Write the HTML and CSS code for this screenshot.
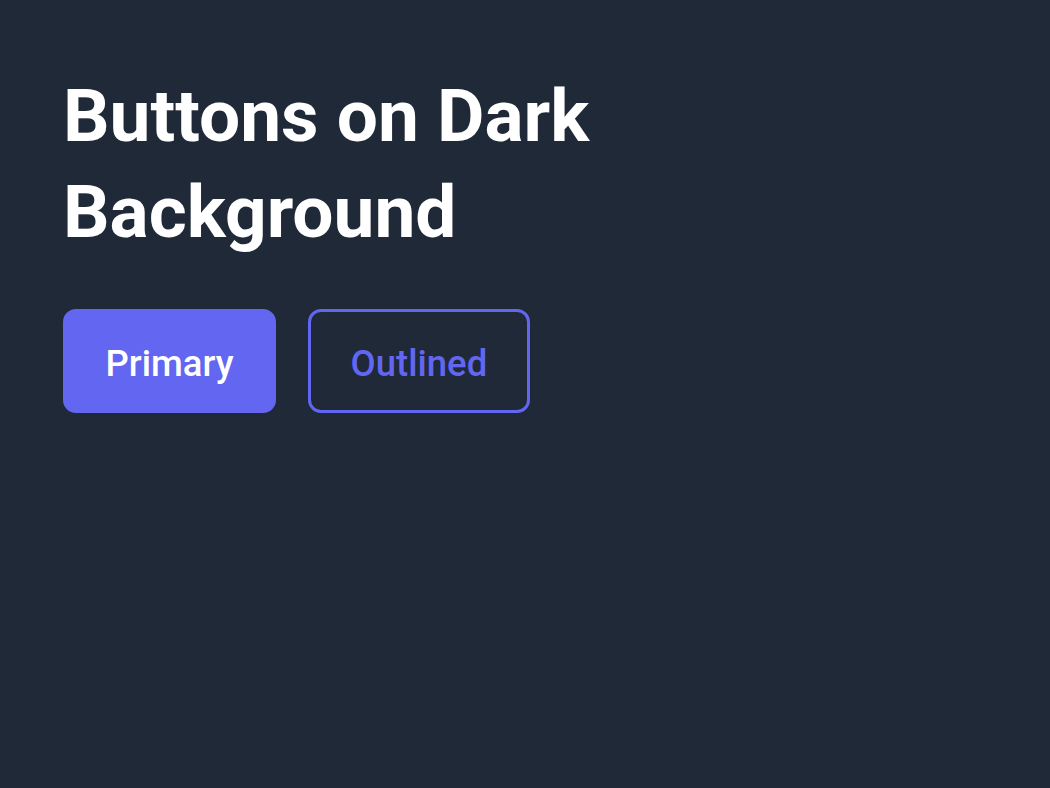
FILE: index.html
```html
<!DOCTYPE html>
<html lang="en">
<head>
<meta charset="utf-8">
<title>Buttons on Dark Background</title>
<link rel="stylesheet" href="styles.css">
</head>
<body>
<main class="page">
  <h1 class="title">Buttons on Dark Background</h1>
  <div class="actions">
    <button class="btn btn-primary">Primary</button>
    <button class="btn btn-outlined">Outlined</button>
  </div>
</main>
</body>
</html>
```
FILE: styles.css
```css
html, body {
  margin: 0;
  padding: 0;
  background: #1f2937;
  height: 100%;
}
body {
  font-family: Roboto, "Liberation Sans", sans-serif;
  color: #ffffff;
}
.page {
  padding: 68px 63px 64px;
}
.title {
  margin: 0 0 49px;
  font-size: 73px;
  line-height: 96px;
  font-weight: 700;
  color: #ffffff;
}
.actions {
  display: flex;
  gap: 32px;
  align-items: flex-start;
}
.btn {
  font-family: Roboto, "Liberation Sans", sans-serif;
  font-size: 36.5px;
  font-weight: 500;
  line-height: 54px;
  padding: 24.5px 39.5px 19.5px;
  border: 3px solid #6366f1;
  border-radius: 13px;
  cursor: pointer;
  margin: 0;
}
.btn-primary {
  background: #6366f1;
  color: #ffffff;
}
.btn-outlined {
  background: transparent;
  color: #6366f1;
}
```
